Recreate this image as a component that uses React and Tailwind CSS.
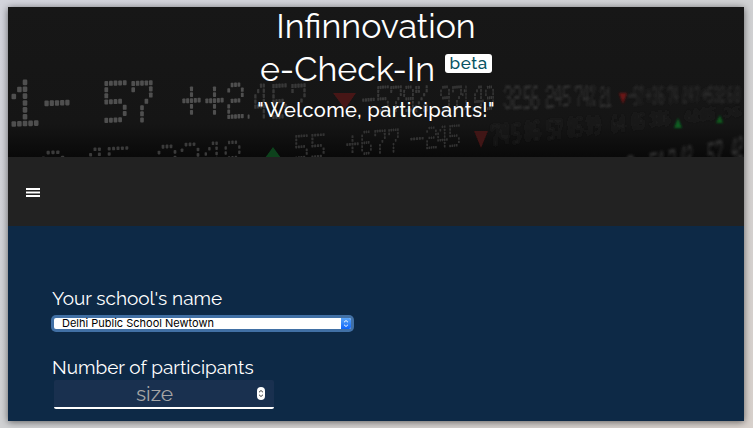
import React from 'react';

const DOTS = {
  '0': ['01110', '10001', '10001', '10001', '10001', '10001', '01110'],
  '1': ['00100', '01100', '10100', '00100', '00100', '00100', '11111'],
  '2': ['01110', '10001', '00001', '01110', '10000', '10000', '11111'],
  '3': ['01110', '10001', '00001', '00110', '00001', '10001', '01110'],
  '4': ['00110', '01010', '10010', '10010', '11111', '00010', '00010'],
  '5': ['11111', '10000', '10000', '11110', '00001', '00001', '11110'],
  '6': ['01110', '10000', '10000', '11110', '10001', '10001', '01110'],
  '7': ['11111', '10001', '00001', '00010', '00100', '00100', '00100'],
  '8': ['01110', '10001', '10001', '01110', '10001', '10001', '01110'],
  '9': ['01110', '10001', '10001', '01111', '00001', '00001', '01110'],
  '-': ['00000', '00000', '00000', '11111', '00000', '00000', '00000'],
  '+': ['00000', '00100', '00100', '11111', '00100', '00100', '00000'],
  '%': ['11001', '11001', '00010', '00100', '01000', '10011', '10011'],
  '.': ['00000', '00000', '00000', '00000', '00000', '00000', '01000'],
};

// Each entry: character, left, top, width, height; positions are inside the banner.
const SHARP = [
  ['1', 3, 73, 28, 48], ['-', 36, 73, 26, 48], ['5', 96, 74, 23, 43], ['7', 123, 74, 22, 43],
  ['+', 174, 74, 19, 41], ['+', 197, 74, 19, 41], ['2', 219, 76, 17, 37], ['.', 237, 76, 12, 37],
];
const ROW_TWO = [
  ['2', 33, 144, 24, 38], ['4', 76, 141, 22, 36], ['5', 99, 140, 22, 36],
  ['2', 149, 138, 20, 40], ['2', 172, 136, 20, 38], ['4', 196, 135, 18, 36], ['8', 216, 134, 17, 36],
];
const MIDDLE = [
  ['4', 246, 77, 14, 36], ['5', 264, 77, 15, 36], ['7', 283, 77, 15, 35],
  ['-', 354, 79, 13, 29], ['5', 369, 79, 12, 27], ['7', 382, 79, 12, 27], ['9', 395, 79, 11, 27], ['%', 407, 79, 13, 27],
  ['9', 432, 79, 10, 25], ['7', 444, 79, 10, 25], ['1', 454, 79, 8, 25], ['.', 463, 79, 5, 25], ['4', 466, 79, 10, 25], ['9', 477, 79, 9, 25],
];
const LOWER = [
  ['5', 287, 128, 13, 25], ['5', 303, 127, 14, 25],
  ['+', 338, 125, 13, 26], ['6', 353, 124, 11, 25], ['7', 366, 123, 12, 25], ['7', 380, 122, 11, 25],
  ['-', 402, 120, 14, 25], ['2', 418, 120, 11, 23], ['4', 429, 119, 11, 23], ['5', 441, 118, 11, 23],
];
const FAR = [
  ['3', 496, 79, 8, 24], ['2', 505, 79, 8, 24], ['.', 513, 79, 4, 24], ['5', 516, 79, 7, 24], ['6', 524, 79, 7, 24],
  ['2', 538, 79, 8, 23], ['4', 547, 79, 7, 21], ['5', 555, 79, 7, 21],
  ['7', 567, 79, 7, 21], ['4', 575, 79, 6, 21], ['%', 582, 79, 5, 21], ['2', 592, 80, 5, 21], ['1', 598, 80, 5, 21],
];
const FARTHEST = [
  ['-', 620, 80, 6, 19], ['5', 626, 80, 4, 19], ['7', 631, 80, 4, 19], ['+', 638, 80, 5, 18], ['3', 644, 80, 5, 18], ['6', 651, 80, 5, 18],
  ['7', 660, 80, 5, 18], ['4', 666, 80, 4, 17], ['2', 675, 80, 4, 17], ['4', 681, 80, 4, 16], ['7', 687, 80, 4, 16],
  ['+', 694, 80, 6, 16], ['5', 700, 80, 5, 16], ['3', 706, 80, 5, 16], ['2', 712, 80, 5, 16], ['6', 720, 80, 5, 16], ['8', 727, 80, 5, 16],
];
const FAINT = [
  ['7', 483, 118, 9, 22], ['4', 493, 117, 8, 21], ['5', 505, 117, 7, 20], ['8', 517, 115, 6, 20], ['6', 525, 114, 7, 20],
  ['5', 540, 113, 7, 20], ['7', 548, 113, 6, 20], ['8', 560, 111, 6, 20], ['5', 568, 111, 6, 19], ['3', 578, 110, 6, 18], ['9', 586, 110, 6, 18],
  ['6', 604, 109, 6, 17], ['4', 611, 109, 6, 17], ['8', 624, 107, 6, 16], ['5', 631, 107, 5, 15], ['3', 642, 106, 6, 14], ['8', 649, 105, 6, 14], ['6', 656, 105, 6, 14],
  ['4', 677, 104, 6, 12], ['2', 685, 103, 6, 12], ['8', 693, 102, 6, 12], ['5', 701, 101, 6, 12], ['3', 716, 101, 6, 10], ['6', 725, 100, 8, 10],
];
const CORNER = [
  ['2', 618, 149, 9, 22], ['5', 642, 146, 7, 22], ['4', 650, 145, 6, 22], ['7', 661, 143, 6, 22],
  ['4', 673, 140, 5, 22], ['2', 679, 139, 5, 22], ['5', 700, 136, 6, 22], ['7', 708, 134, 6, 22], ['4', 724, 132, 5, 22], ['2', 730, 130, 5, 22],
];

function Led({ items, fill, blur, size = 0.82 }) {
  return (
    <g fill={fill} filter={blur}>
      {items.map(([char, x, y, w, h], index) => {
        const stepX = w / 5;
        const stepY = h / 7;
        return DOTS[char].map((line, row) =>
          [...line].map((on, col) =>
            on === '1' ? (
              <rect
                key={`${index}-${row}-${col}`}
                x={x + (col + (1 - size) / 2) * stepX}
                y={y + row * stepY - col * 0.2}
                width={stepX * size}
                height={stepY * size}
                rx={stepX * 0.2}
              />
            ) : null
          )
        );
      })}
    </g>
  );
}

function TickerBoard() {
  return (
    <svg className="absolute inset-0" width="736" height="150" viewBox="0 0 736 150" aria-hidden="true">
      <defs>
        <linearGradient id="shade" x1="0" y1="0" x2="0" y2="1">
          <stop offset="0" stopColor="#171717" />
          <stop offset="0.78" stopColor="#151515" />
          <stop offset="1" stopColor="#090909" />
        </linearGradient>
        <filter id="soft"><feGaussianBlur stdDeviation="0.5" /></filter>
        <filter id="mid"><feGaussianBlur stdDeviation="0.65" /></filter>
        <filter id="far"><feGaussianBlur stdDeviation="1" /></filter>
        <filter id="farthest"><feGaussianBlur stdDeviation="1.7" /></filter>
      </defs>
      <rect width="736" height="150" fill="url(#shade)" />
      <Led items={SHARP} fill="#4f4f4f" blur="url(#soft)" />
      <Led items={ROW_TWO} fill="#3a3a3a" blur="url(#mid)" size={0.68} />
      <Led items={MIDDLE} fill="#383838" blur="url(#mid)" />
      <Led items={LOWER} fill="#333333" blur="url(#mid)" size={0.75} />
      <Led items={FAR} fill="#3c3c3c" blur="url(#far)" />
      <Led items={FARTHEST} fill="#3d3d3d" blur="url(#farthest)" />
      <Led items={FAINT} fill="#242424" blur="url(#farthest)" />
      <Led items={CORNER} fill="#4a4a4a" blur="url(#farthest)" />
      <g filter="url(#mid)">
        <path d="M325 86h23l-11 16z" fill="#471515" />
        <path d="M466 124h14l-7 17z" fill="#401313" />
        <path d="M257 151l8-11 8 11z" fill="#0b421c" />
      </g>
      <g filter="url(#far)">
        <path d="M611 86h8l-4 11z" fill="#6b1313" />
        <path d="M666 121l4-10 4 10z" fill="#0b5f20" />
        <path d="M708 116l4-8 3 8z" fill="#0b5a1d" />
      </g>
    </svg>
  );
}

function Header() {
  return (
    <header className="relative h-[150px] overflow-hidden bg-[#161616]">
      <TickerBoard />
      <div className="relative flex flex-col items-center whitespace-nowrap text-white">
        <h1 className="flex flex-col items-center text-[34px] leading-[43px]">
          <span className="-mt-[2px]">Infinnovation</span>
          <span className="flex items-start">
            <span>e-Check-In</span>
            <span className="mt-[6px] ml-[10px] flex h-[19px] w-[47px] items-center justify-center rounded-[3px] bg-white text-[17px] leading-none font-medium tracking-[0.5px] text-[#075363]">beta</span>
          </span>
        </h1>
        <p className="mt-[7px] text-[20px] leading-6 font-medium tracking-[0.4px]">"Welcome, participants!"</p>
      </div>
    </header>
  );
}

function Chevrons() {
  return (
    <svg width="6" height="9" viewBox="0 0 7 9" fill="none" stroke="currentColor" strokeWidth="1.1">
      <path d="M1.2 3l2.300-2 2.300 2M1.200 6l2.300 2 2.300-2" />
    </svg>
  );
}

export default function App() {
  return (
    <div className="h-[428px] w-[753px] overflow-hidden bg-gradient-to-br from-[#d3d4dc] via-[#d0d1d3] to-[#d8d1cc] pt-[7px] pl-[8px] font-['Raleway','Lato',sans-serif]">
      <main className="flex h-[414px] w-[736px] flex-col bg-[#0d2946] shadow-[0_1px_7px_rgba(0,0,0,0.55)]">
        <Header />
        <nav className="flex h-[69px] shrink-0 items-center bg-[#222222] pt-[2px] pl-[18px]">
          <button aria-label="Menu">
            <svg width="14" height="9" viewBox="0 0 14 9" fill="#ffffff">
              <rect width="14" height="2" />
              <rect y="3" width="14" height="1" fill="#8a8a8a" />
              <rect y="4" width="14" height="1" />
              <rect y="5" width="14" height="1" fill="#8a8a8a" />
              <rect y="7" width="14" height="2" />
            </svg>
          </button>
        </nav>
        <form className="flex flex-col items-start pt-[59px] pl-[44px] whitespace-nowrap text-white">
          <label className="h-[30px] text-[19px] leading-[26px]">Your school's name</label>
          <div className="-ml-px flex h-[17px] w-[303px] items-center rounded-[5px] bg-[#4170a5] p-[3px]">
            <div className="flex h-[11px] w-full items-center rounded-[2px] bg-white">
              <span className="flex-1 pl-[8px] font-['Inter','Liberation_Sans',sans-serif] text-[11px] leading-[11px] text-black">Delhi Public School Newtown</span>
              <span className="flex h-[11px] w-[10px] items-center justify-center rounded-r-[2px] bg-gradient-to-b from-[#5ba5f7] to-[#0b63fb] text-white">
                <Chevrons />
              </span>
            </div>
          </div>
          <label className="mt-[22px] h-[26px] text-[19px] leading-[26px]">Number of participants</label>
          <div className="ml-[2px] flex h-[29px] w-[220px] items-center rounded-[2px] border-b-2 border-white bg-[#19304f] pr-[9px]">
            <span className="flex-1 pr-[2px] text-center text-[21px] leading-6 text-[#a5a5a5]">size</span>
            <span className="flex h-[13px] w-[8px] items-center justify-center rounded-[4px] bg-white text-[#333333]">
              <Chevrons />
            </span>
          </div>
        </form>
      </main>
    </div>
  );
}
